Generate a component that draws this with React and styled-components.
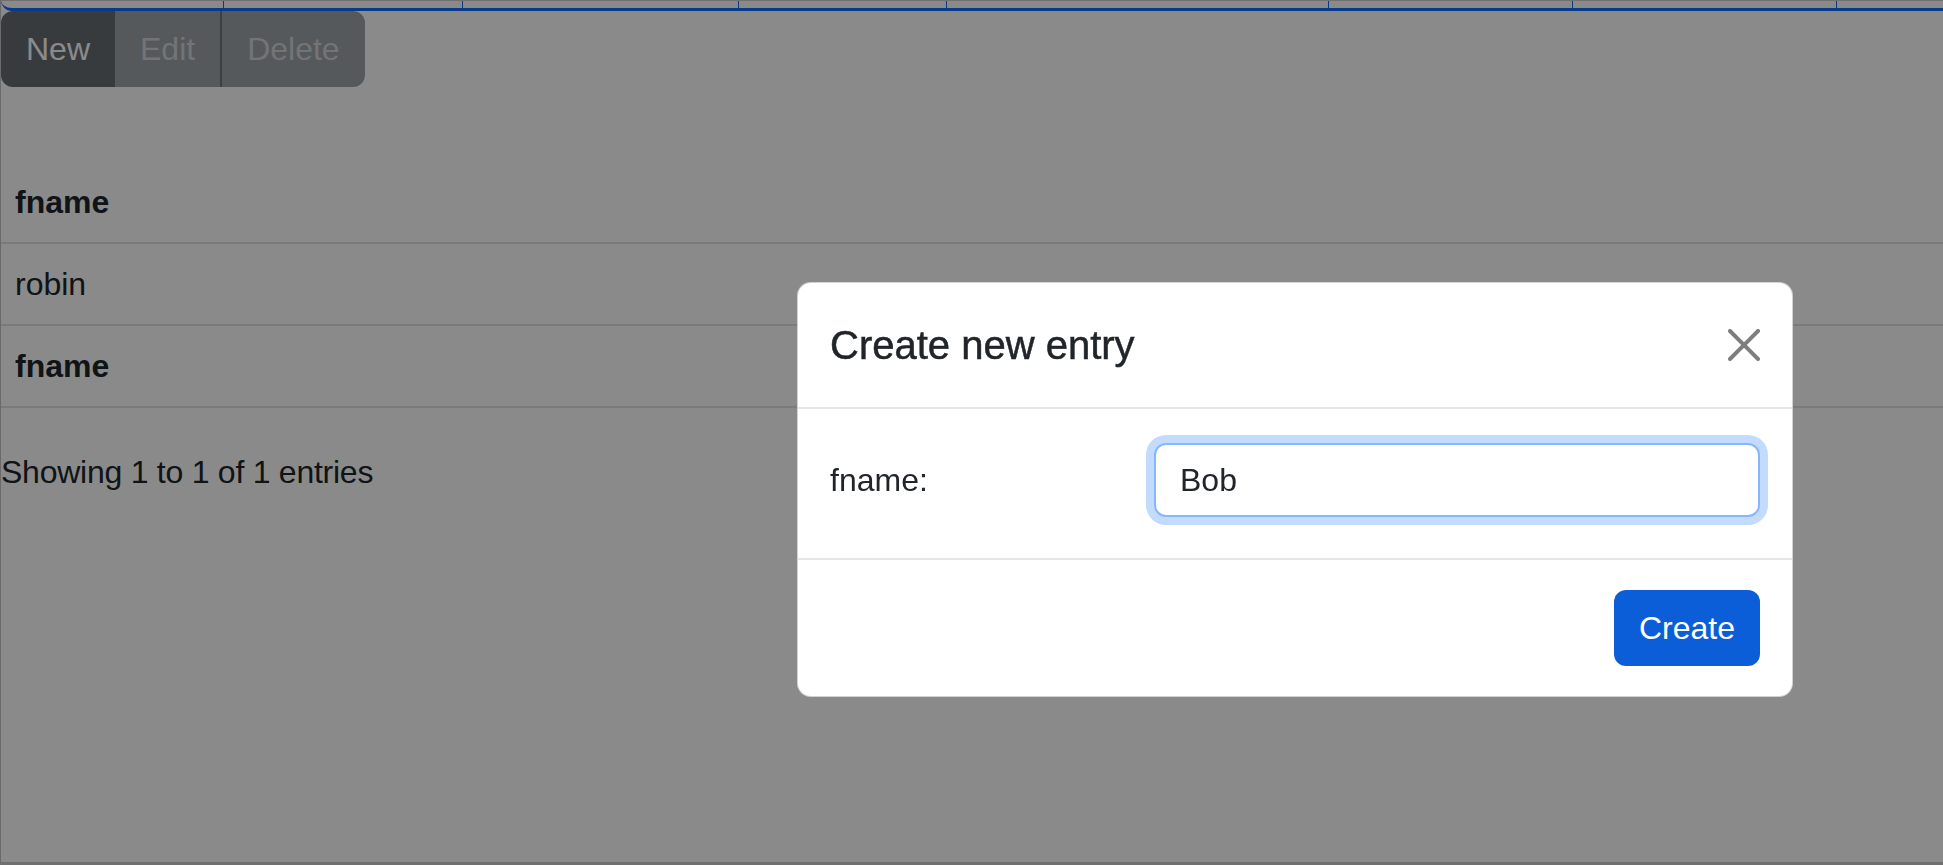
import React from "react";
import styled, { createGlobalStyle } from "styled-components";

const GlobalStyle = createGlobalStyle`
  html, body {
    margin: 0;
    padding: 0;
    background: #fff;
  }
  body {
    font-family: "Liberation Sans", Arial, Helvetica, sans-serif;
    color: #212529;
    font-size: 32px;
  }
  * { box-sizing: border-box; }
`;

const headCols = [223, 239, 276, 208, 382, 244, 264, 107];

export default function App() {
  return (
    <>
      <GlobalStyle />
      <Page>
        <HeadStrip>
          {headCols.map((w, i) => (
            <HeadCell key={i} $w={w} $last={i === headCols.length - 1} />
          ))}
        </HeadStrip>

        <Toolbar>
          <ToolButton $variant="active">New</ToolButton>
          <ToolButton disabled>Edit</ToolButton>
          <ToolButton disabled $divider>
            Delete
          </ToolButton>
        </Toolbar>

        <Table>
          <thead>
            <tr>
              <Th>fname</Th>
            </tr>
          </thead>
          <tbody>
            <tr>
              <Td>robin</Td>
            </tr>
          </tbody>
          <tfoot>
            <tr>
              <Th>fname</Th>
            </tr>
          </tfoot>
        </Table>

        <Info>Showing 1 to 1 of 1 entries</Info>
      </Page>

      <Backdrop />
      <Dialog role="dialog">
        <DialogHeader>
          <DialogTitle>Create new entry</DialogTitle>
          <CloseButton aria-label="Close">
            <svg width="32" height="32" viewBox="0 0 16 16" fill="#000">
              <path d="M.293.293a1 1 0 0 1 1.414 0L8 6.586 14.293.293a1 1 0 1 1 1.414 1.414L9.414 8l6.293 6.293a1 1 0 0 1-1.414 1.414L8 9.414l-6.293 6.293a1 1 0 0 1-1.414-1.414L6.586 8 .293 1.707a1 1 0 0 1 0-1.414z" />
            </svg>
          </CloseButton>
        </DialogHeader>
        <DialogBody>
          <Label htmlFor="fname">fname:</Label>
          <Input id="fname" defaultValue="Bob" />
        </DialogBody>
        <DialogFooter>
          <PrimaryButton>Create</PrimaryButton>
        </DialogFooter>
      </Dialog>
    </>
  );
}

const Page = styled.div`
  min-height: 865px;
  border-left: 1px solid #c4c4c4;
  border-bottom: 3px solid #cfcfcf;
  overflow: hidden;
`;

const HeadStrip = styled.div`
  display: flex;
  height: 11px;
  border-top: 1px solid #d0d0d0;
  border-bottom: 3px solid #0d6efd;
  border-bottom-left-radius: 14px;
`;

const HeadCell = styled.div`
  flex: 0 0 ${(p) => p.$w}px;
  border-right: ${(p) => (p.$last ? "none" : "1px solid #0d6efd")};
`;

const Toolbar = styled.div`
  display: inline-flex;
  border-radius: 12px;
  overflow: hidden;
`;

const ToolButton = styled.button`
  height: 76px;
  padding: 0 25px;
  border: none;
  border-left: ${(p) => (p.$divider ? "2px solid #6f777e" : "none")};
  font-family: inherit;
  font-size: 32px;
  line-height: 76px;
  background: ${(p) => (p.$variant === "active" ? "#686e73" : "#9fa5aa")};
  color: ${(p) => (p.$variant === "active" ? "#ffffff" : "#d3d6d9")};
  cursor: pointer;

  &:disabled {
    cursor: default;
  }
`;

const Table = styled.table`
  width: 100%;
  margin-top: 75px;
  border-collapse: collapse;
`;

const Th = styled.th`
  padding: 16px 14px;
  line-height: 48px;
  font-size: 32px;
  font-weight: 700;
  text-align: left;
  border-bottom: 2px solid #dee2e6;
`;

const Td = styled.td`
  padding: 16px 14px;
  line-height: 48px;
  font-size: 32px;
  border-bottom: 2px solid #dee2e6;
`;

const Info = styled.div`
  margin-top: 40px;
  font-size: 32px;
  line-height: 48px;
  letter-spacing: -0.25px;
`;

const Backdrop = styled.div`
  position: fixed;
  inset: 0;
  background: rgba(0, 0, 0, 0.46);
`;

const Dialog = styled.div`
  position: fixed;
  left: 797px;
  top: 282px;
  width: 996px;
  background: #fff;
  border: 1px solid rgba(0, 0, 0, 0.175);
  border-radius: 14px;
  overflow: hidden;
`;

const DialogHeader = styled.div`
  display: flex;
  align-items: center;
  justify-content: space-between;
  padding: 32px;
  border-bottom: 2px solid #e3e6e9;
`;

const DialogTitle = styled.h5`
  margin: 0;
  font-size: 40px;
  line-height: 60px;
  font-weight: 500;
  letter-spacing: 0;
  color: #212529;
  -webkit-text-stroke: 0.5px #212529;
`;

const CloseButton = styled.button`
  display: flex;
  padding: 0;
  border: none;
  background: transparent;
  opacity: 0.5;
  cursor: pointer;
`;

const DialogBody = styled.div`
  display: grid;
  grid-template-columns: 324px 1fr;
  align-items: center;
  padding: 34px 32px 41px;
`;

const Label = styled.label`
  font-size: 32px;
  line-height: 48px;
`;

const Input = styled.input`
  height: 74px;
  width: 100%;
  padding: 0 24px;
  border: 2px solid #86b7fe;
  border-radius: 12px;
  font-family: inherit;
  font-size: 32px;
  color: #212529;
  outline: none;
  box-shadow: 0 0 0 8px rgba(13, 110, 253, 0.25);
`;

const DialogFooter = styled.div`
  display: flex;
  justify-content: flex-end;
  padding: 30px 32px;
  border-top: 2px solid #e3e6e9;
`;

const PrimaryButton = styled.button`
  height: 76px;
  padding: 0 25px;
  border: none;
  border-radius: 12px;
  background: #0b5ed7;
  color: #fff;
  font-family: inherit;
  font-size: 32px;
  cursor: pointer;
`;
